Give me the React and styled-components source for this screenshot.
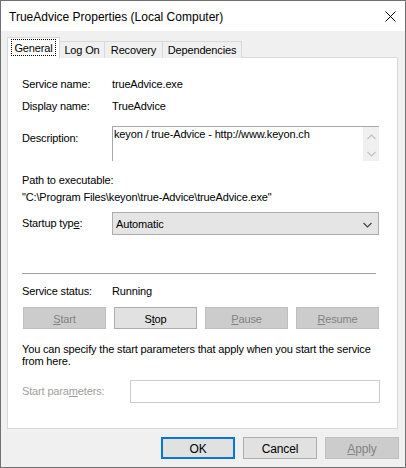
import React from "react";
import styled, { createGlobalStyle } from "styled-components";

const GlobalStyle = createGlobalStyle`
  html, body {
    margin: 0;
    padding: 0;
    background: #ffffff;
  }
  * {
    box-sizing: border-box;
  }
`;

const ui = `"Liberation Sans", Arial, sans-serif`;

const Window = styled.div`
  width: 406px;
  height: 468px;
  border: 1px solid #707070;
  display: flex;
  flex-direction: column;
  font-family: ${ui};
  font-size: 11px;
  letter-spacing: -0.15px;
  color: #000;
`;

const TitleBar = styled.div`
  height: 30px;
  background: #fff;
  display: flex;
  align-items: center;
  justify-content: space-between;
  padding: 0 9px 0 8px;
`;

const Title = styled.span`
  font-size: 12px;
  letter-spacing: 0;
  margin-top: 1px;
`;

const CloseIcon = styled.svg`
  width: 11px;
  height: 11px;
`;

const Body = styled.div`
  flex: 1;
  background: #f0f0f0;
  padding: 7px 7px 7px 6px;
  display: flex;
  flex-direction: column;
`;

const TabStrip = styled.div`
  display: flex;
  align-items: flex-end;
  height: 20px;
  margin-bottom: -1px;
  position: relative;
  z-index: 1;
`;

const Tab = styled.div`
  width: ${(p) => p.$w}px;
  height: ${(p) => (p.$active ? 21 : 17)}px;
  background: ${(p) => (p.$active ? "#fff" : "#f0f0f0")};
  border-top: 1px solid #d9d9d9;
  border-right: 1px solid #d9d9d9;
  border-left: ${(p) => (p.$first ? "1px solid #d9d9d9" : "none")};
  display: flex;
  align-items: center;
  justify-content: center;
  padding-bottom: ${(p) => (p.$active ? 2 : 0)}px;
`;

const FocusLabel = styled.span`
  outline: 1px dotted #000;
  padding: 2px 2px 1px;
`;

const Panel = styled.div`
  height: 372px;
  background: #fff;
  border: 1px solid #d9d9d9;
  padding: 20px 18px 0 14px;
  display: flex;
  flex-direction: column;
`;

const FieldRow = styled.div`
  display: flex;
  align-items: ${(p) => p.$align || "center"};
  margin-top: ${(p) => p.$gap || 0}px;
  line-height: 13px;
`;

const FieldLabel = styled.span`
  width: ${(p) => p.$w || 90}px;
  flex-shrink: 0;
  color: ${(p) => (p.$muted ? "#a0a0a0" : "#000")};
  padding-top: ${(p) => p.$top || 0}px;
`;

const Value = styled.span``;

const DescriptionBox = styled.div`
  flex: 1;
  height: 35px;
  border-top: 1px solid #a8a8a8;
  border-left: 1px solid #a8a8a8;
  display: flex;
`;

const DescriptionText = styled.div`
  flex: 1;
  padding: 1px 0 0 1px;
  line-height: 13px;
`;

const ScrollTrack = styled.div`
  width: 16px;
  background: #f0f0f0;
  display: flex;
  flex-direction: column;
  align-items: center;
  justify-content: space-between;
  padding: 7px 0 4px;
`;

const Block = styled.div`
  margin-top: ${(p) => p.$gap || 0}px;
  line-height: ${(p) => p.$lh || 13}px;
`;

const Select = styled.div`
  flex: 1;
  height: 23px;
  background: #e5e5e5;
  border: 1px solid #adadad;
  display: flex;
  align-items: center;
  justify-content: space-between;
  padding: 2px 6px 0 3px;
`;

const Separator = styled.div`
  height: 1px;
  background: #a0a0a0;
  margin: 38px 3px 0 0;
`;

const ButtonRow = styled.div`
  display: flex;
  gap: 8px;
  margin-top: 9px;
  padding-left: 1px;
`;

const PushButton = styled.div`
  flex: 1;
  height: 22px;
  display: flex;
  align-items: center;
  justify-content: center;
  background: ${(p) => (p.$disabled ? "#cccccc" : "#e1e1e1")};
  border: ${(p) =>
    p.$default ? "2px solid #0078d7" : p.$disabled ? "1px solid #bfbfbf" : "1px solid #adadad"};
  color: ${(p) => (p.$disabled ? "#838383" : "#000")};
  font-size: ${(p) => (p.$large ? 12 : 11)}px;
  padding-top: 1px;
`;

const ParamInput = styled.div`
  flex: 1;
  height: 23px;
  margin-right: -1px;
  border: 1px solid #cccccc;
  background: #fff;
`;

const Footer = styled.div`
  display: flex;
  justify-content: flex-end;
  gap: 8px;
  margin: 8px -1px 0 0;
`;

const FooterButton = styled(PushButton)`
  flex: 0 0 74px;
`;

const Chevron = ({ up, color = "#c0c0c0" }) => (
  <svg width="9" height="6" viewBox="0 0 9 6">
    <path
      d={up ? "M0.5 5 L4.5 1 L8.5 5" : "M0.5 1 L4.5 5 L8.5 1"}
      fill="none"
      stroke={color}
      strokeWidth="1.1"
    />
  </svg>
);

export default function App() {
  return (
    <>
      <GlobalStyle />
      <Window>
        <TitleBar>
          <Title>TrueAdvice Properties (Local Computer)</Title>
          <CloseIcon viewBox="0 0 11 11">
            <path d="M0.5 0.5 L10.5 10.5 M10.5 0.5 L0.5 10.5" stroke="#000" strokeWidth="1" />
          </CloseIcon>
        </TitleBar>
        <Body>
          <TabStrip>
            <Tab $w={53} $active $first>
              <FocusLabel>General</FocusLabel>
            </Tab>
            <Tab $w={45}>Log On</Tab>
            <Tab $w={58}>Recovery</Tab>
            <Tab $w={79}>Dependencies</Tab>
          </TabStrip>
          <Panel>
            <FieldRow>
              <FieldLabel>Service name:</FieldLabel>
              <Value>trueAdvice.exe</Value>
            </FieldRow>
            <FieldRow $gap={9}>
              <FieldLabel>Display name:</FieldLabel>
              <Value>TrueAdvice</Value>
            </FieldRow>
            <FieldRow $gap={13} $align="flex-start">
              <FieldLabel $top={6}>Description:</FieldLabel>
              <DescriptionBox>
                <DescriptionText>keyon / true-Advice - http://www.keyon.ch</DescriptionText>
                <ScrollTrack>
                  <Chevron up />
                  <Chevron />
                </ScrollTrack>
              </DescriptionBox>
            </FieldRow>
            <Block $gap={13}>Path to executable:</Block>
            <Block $gap={4}>"C:\Program Files\keyon\true-Advice\trueAdvice.exe"</Block>
            <FieldRow $gap={8}>
              <FieldLabel>
                Startup typ<u>e</u>:
              </FieldLabel>
              <Select>
                <span>Automatic</span>
                <Chevron color="#404040" />
              </Select>
            </FieldRow>
            <Separator />
            <FieldRow $gap={11}>
              <FieldLabel>Service status:</FieldLabel>
              <Value>Running</Value>
            </FieldRow>
            <ButtonRow>
              <PushButton $disabled>
                <span>
                  <u>S</u>tart
                </span>
              </PushButton>
              <PushButton>
                <span>
                  S<u>t</u>op
                </span>
              </PushButton>
              <PushButton $disabled>
                <span>
                  <u>P</u>ause
                </span>
              </PushButton>
              <PushButton $disabled>
                <span>
                  <u>R</u>esume
                </span>
              </PushButton>
            </ButtonRow>
            <Block $gap={14} $lh={12}>
              You can specify the start parameters that apply when you start the service
              <br />
              from here.
            </Block>
            <FieldRow $gap={13}>
              <FieldLabel $w={108} $muted>
                Start para<u>m</u>eters:
              </FieldLabel>
              <ParamInput />
            </FieldRow>
          </Panel>
          <Footer>
            <FooterButton $default $large>OK</FooterButton>
            <FooterButton $large>Cancel</FooterButton>
            <FooterButton $disabled $large>
              <span>
                <u>A</u>pply
              </span>
            </FooterButton>
          </Footer>
        </Body>
      </Window>
    </>
  );
}
